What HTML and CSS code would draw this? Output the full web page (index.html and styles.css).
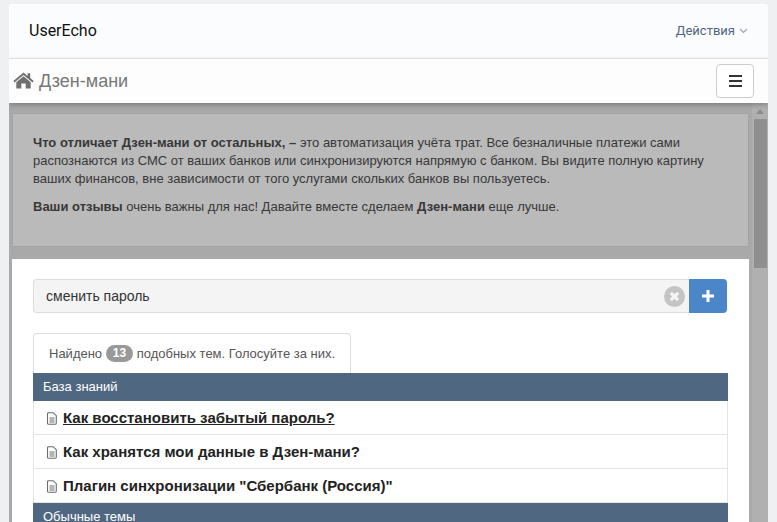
FILE: index.html
```html
<!DOCTYPE html>
<html lang="ru">
<head>
<meta charset="utf-8">
<title>Дзен-мани</title>
<link rel="stylesheet" href="styles.css">
</head>
<body>
<div class="window">
  <nav class="topbar">
    <span class="brand">UserEcho</span>
    <span class="actions">Действия
      <svg class="caret" width="9" height="6" viewBox="0 0 9 6"><path d="M1 1l3.500 3.500L8 1" fill="none" stroke="#9aa5b1" stroke-width="1.2"/></svg>
    </span>
  </nav>
  <header class="subbar">
    <h1 class="title">
      <svg class="home" width="21" height="17" viewBox="0 0 21 17"><path d="M10.500 0.600 L0.300 9 L1.500 10.400 L10.500 3 L19.500 10.400 L20.700 9 L17.200 6.100 V1.300 H14.600 V3.900 Z M10.500 4.300 L3.300 10.200 V16.600 H8.300 V11.600 H12.700 V16.600 H17.700 V10.200 Z" fill="#6f6f6f"/></svg>
      Дзен-мани
    </h1>
    <button class="burger" type="button" aria-label="Меню"><span></span><span></span><span></span></button>
  </header>
  <div class="stage">
    <main class="content">
      <section class="well">
        <p><b>Что отличает Дзен-мани от остальных, –</b> это автоматизация учёта трат. Все безналичные платежи сами распознаются из СМС от ваших банков или синхронизируются напрямую с банком. Вы видите полную картину ваших финансов, вне зависимости от того услугами скольких банков вы пользуетесь.</p>
        <p><b>Ваши отзывы</b> очень важны для нас! Давайте вместе сделаем <b>Дзен-мани</b> еще лучше.</p>
      </section>
      <section class="card">
        <div class="search">
          <div class="field">
            <span class="query">сменить пароль</span>
            <svg class="clear" width="21" height="21" viewBox="0 0 20 20"><circle cx="10" cy="10" r="10" fill="#c4c4c4"/><path d="M6.500 6.500l7 7M13.500 6.500l-7 7" stroke="#f5f5f5" stroke-width="3"/></svg>
          </div>
          <button class="add" type="button" aria-label="Добавить"><svg width="14" height="14" viewBox="0 0 14 14"><path d="M7 1v12M1 7h12" stroke="#fff" stroke-width="3"/></svg></button>
        </div>
        <div class="tab">Найдено <span class="badge">13</span> подобных тем. Голосуйте за них.</div>
        <div class="group">База знаний</div>
        <a class="row" href="#"><svg class="doc" width="10" height="13" viewBox="0 0 10 13"><path d="M1.500 .7h4.600l3.200 3v7.200q0 1.400-1.400 1.400H1.500q-1 0-1-1.400V1.700q0-1 1-1z M2.500 6h5M2.500 8h5M2.500 10h5" fill="none" stroke="#6a6a6a" stroke-width="1.100"/></svg><span class="link hover">Как восстановить забытый пароль?</span></a>
        <a class="row" href="#"><svg class="doc" width="10" height="13" viewBox="0 0 10 13"><path d="M1.500 .7h4.600l3.200 3v7.200q0 1.400-1.400 1.400H1.500q-1 0-1-1.400V1.700q0-1 1-1z M2.500 6h5M2.500 8h5M2.500 10h5" fill="none" stroke="#6a6a6a" stroke-width="1.100"/></svg><span class="link">Как хранятся мои данные в Дзен-мани?</span></a>
        <a class="row" href="#"><svg class="doc" width="10" height="13" viewBox="0 0 10 13"><path d="M1.500 .7h4.600l3.200 3v7.200q0 1.400-1.400 1.400H1.500q-1 0-1-1.400V1.700q0-1 1-1z M2.500 6h5M2.500 8h5M2.500 10h5" fill="none" stroke="#6a6a6a" stroke-width="1.100"/></svg><span class="link">Плагин синхронизации "Сбербанк (Россия)"</span></a>
        <div class="group">Обычные темы</div>
      </section>
    </main>
    <div class="scrollbar"><span class="arrow"></span><span class="thumb"></span></div>
  </div>
</div>
</body>
</html>
```
FILE: styles.css
```css
* { box-sizing: border-box; }
html, body { height: 100%; }
body {
  margin: 0;
  padding: 4px 9px 0;
  background: #eef0f2;
  overflow: hidden;
  font-family: "Liberation Sans", Arial, sans-serif;
  font-size: 13px;
  color: #333;
}
.window {
  height: 518px;
  display: flex;
  flex-direction: column;
  overflow: hidden;
  border-radius: 3px 3px 0 0;
}
.topbar {
  height: 55px;
  flex: none;
  display: flex;
  align-items: center;
  justify-content: space-between;
  padding: 0 20px;
  background: #fbfcfe;
  border-bottom: 1px solid #e7e7e7;
}
.brand { font-family: Roboto, sans-serif; font-size: 16px; color: #111; margin-top: -2px; }
.actions { font-family: Roboto, sans-serif; font-size: 13px; color: #51667e; display: flex; align-items: center; gap: 4px; margin-top: -2px; }
.caret { margin-top: 2px; }
.subbar {
  height: 44px;
  flex: none;
  display: flex;
  align-items: center;
  justify-content: space-between;
  padding: 0 14px 0 4px;
  background: #fdfdfd;
  position: relative;
  box-shadow: 0 2px 5px rgba(0,0,0,.25);
}
.title {
  margin: 0;
  display: flex;
  align-items: center;
  gap: 5px;
  font-size: 18px;
  font-weight: 400;
  color: #777;
}
.home { margin-top: -2px; }
.burger {
  width: 38px;
  height: 34px;
  padding: 0;
  display: flex;
  flex-direction: column;
  align-items: center;
  justify-content: center;
  gap: 3px;
  background: #fff;
  border: 1px solid #ccc;
  border-radius: 4px;
}
.burger span { width: 13px; height: 2px; background: #333; }
.stage {
  flex: 1;
  display: flex;
  background: #a9a9a9;
  min-height: 0;
}
.content {
  flex: 1;
  min-width: 0;
  padding: 10px 3px 0 3px;
  overflow: hidden;
}
.well {
  height: 134px;
  padding: 20px 20px 0;
  background: #bababa;
  border: 1px solid #a3a3a3;
  border-radius: 2px;
  line-height: 18px;
  color: #383838;
}
.well p { margin: 0 0 10px; }
.card {
  margin: 12px 0 0;
  height: 300px;
  padding: 20px 21px 0;
  background: #fff;
}
.search { display: flex; height: 34px; margin-right: 1px; }
.field {
  flex: 1;
  display: flex;
  align-items: center;
  justify-content: space-between;
  padding: 0 4px 0 12px;
  background: #f4f4f4;
  border: 1px solid #ddd;
  border-right: 0;
  border-radius: 4px 0 0 4px;
}
.query { font-size: 14px; color: #333; }
.add {
  width: 38px;
  display: flex;
  align-items: center;
  justify-content: center;
  padding: 0;
  background: #4a86c8;
  border: 0;
  border-radius: 0 4px 4px 0;
}
.tab {
  width: 318px;
  height: 40px;
  margin-top: 20px;
  display: flex;
  align-items: center;
  padding: 0 15px;
  border: 1px solid #ddd;
  border-bottom: 0;
  border-radius: 4px 4px 0 0;
  color: #555;
  white-space: pre;
}
.badge {
  padding: 0 7px;
  height: 17px;
  line-height: 17px;
  border-radius: 9px;
  background: #999;
  color: #fff;
  font-size: 12px;
  font-weight: 700;
}
.group {
  height: 28px;
  display: flex;
  align-items: center;
  padding: 0 10px 2px;
  background: #4f6781;
  color: #fff;
  font-size: 13px;
}
.row {
  height: 34px;
  display: flex;
  align-items: center;
  gap: 6px;
  padding: 0 13px;
  border: 1px solid #e4e4e4;
  border-width: 0 1px 1px;
  font-size: 15px;
  font-weight: 700;
  color: #222;
  text-decoration: none;
}
.doc { flex: none; margin-top: 1px; }
.hover { text-decoration: underline; }
.scrollbar {
  width: 16px;
  flex: none;
  background: #b0b0b0;
  display: flex;
  flex-direction: column;
  align-items: center;
}
.arrow {
  margin: 6px 0 5px;
  width: 0;
  height: 0;
  border: 4px solid transparent;
  border-top: 0;
  border-bottom: 5px solid #8b8b8b;
}
.thumb { width: 13px; height: 149px; background: #8f8f8f; }
```
